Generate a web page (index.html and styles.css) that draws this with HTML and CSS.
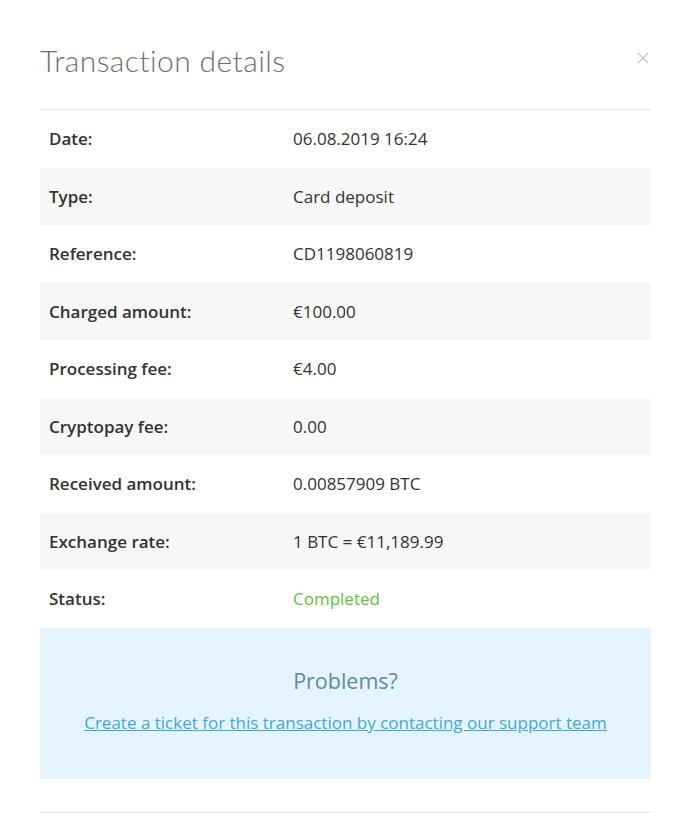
FILE: index.html
```html
<!DOCTYPE html>
<html lang="en">
<head>
  <meta charset="UTF-8">
  <title>Transaction details</title>
  <link rel="stylesheet" href="styles.css">
</head>
<body>
  <div class="modal">
    <!-- header -->
    <div class="modal-head">
      <h2 class="modal-title">Transaction details</h2>
      <button class="close" aria-label="Close">
        <svg width="12" height="12" viewBox="0 0 12 12"><path d="M1 1L11 11M11 1L1 11" stroke="#c8c8c8" stroke-width="1.3" fill="none"/></svg>
      </button>
    </div>
    <!-- details -->
    <div class="details">
      <div class="row"><div class="label">Date:</div><div class="value">06.08.2019 16:24</div></div>
      <div class="row"><div class="label">Type:</div><div class="value">Card deposit</div></div>
      <div class="row"><div class="label">Reference:</div><div class="value">CD1198060819</div></div>
      <div class="row"><div class="label">Charged amount:</div><div class="value">€100.00</div></div>
      <div class="row"><div class="label">Processing fee:</div><div class="value">€4.00</div></div>
      <div class="row"><div class="label">Cryptopay fee:</div><div class="value">0.00</div></div>
      <div class="row"><div class="label">Received amount:</div><div class="value">0.00857909 BTC</div></div>
      <div class="row"><div class="label">Exchange rate:</div><div class="value">1 BTC = €11,189.99</div></div>
      <div class="row"><div class="label">Status:</div><div class="value ok">Completed</div></div>
    </div>
    <!-- support -->
    <div class="problems">
      <div class="problems-title">Problems?</div>
      <a href="#" class="problems-link">Create a ticket for this transaction by contacting our support team</a>
    </div>
    <div class="modal-foot"></div>
  </div>
</body>
</html>
```

FILE: styles.css
```css
body { background:#fff; font-family:'Open Sans', Lato, Arial, sans-serif; margin:0; color:#333;}
.modal { width:611px; margin:0 38px 0 40px;}
.modal-head { display:flex; align-items:flex-start; height:110px; border-bottom:1px solid #e6e6e6; box-sizing:border-box;}
.modal-title { font-family:Lato, 'Open Sans', sans-serif; font-weight:300; font-size:30px; color:#707070; margin:42px 0 0 0; letter-spacing:0.4px;}
.close { margin-left:auto; margin-top:52px; margin-right:2px; background:none; border:0; padding:0; cursor:pointer; display:flex;}
.details { display:flex; flex-direction:column;}
.row { display:grid; grid-template-columns:244px 1fr; height:57.5px; align-items:center; padding:0 9px; font-size:17px;}
.row:nth-child(even) { background:#f7f7f7;}
.label { font-weight:600; color:#333;}
.value { color:#333;}
.value.ok { color:#5cc23f;}
.problems { background:#e5f4fc; height:151px; display:flex; flex-direction:column; align-items:center; padding-top:38px; box-sizing:border-box;}
.problems-title { font-size:21.5px; color:#5e8ba3; font-weight:400; margin-bottom:16px;}
.problems-link { color:#40a8e0; font-size:17px;}
.modal-foot { height:33px; border-bottom:1px solid #e6e6e6;}
```
